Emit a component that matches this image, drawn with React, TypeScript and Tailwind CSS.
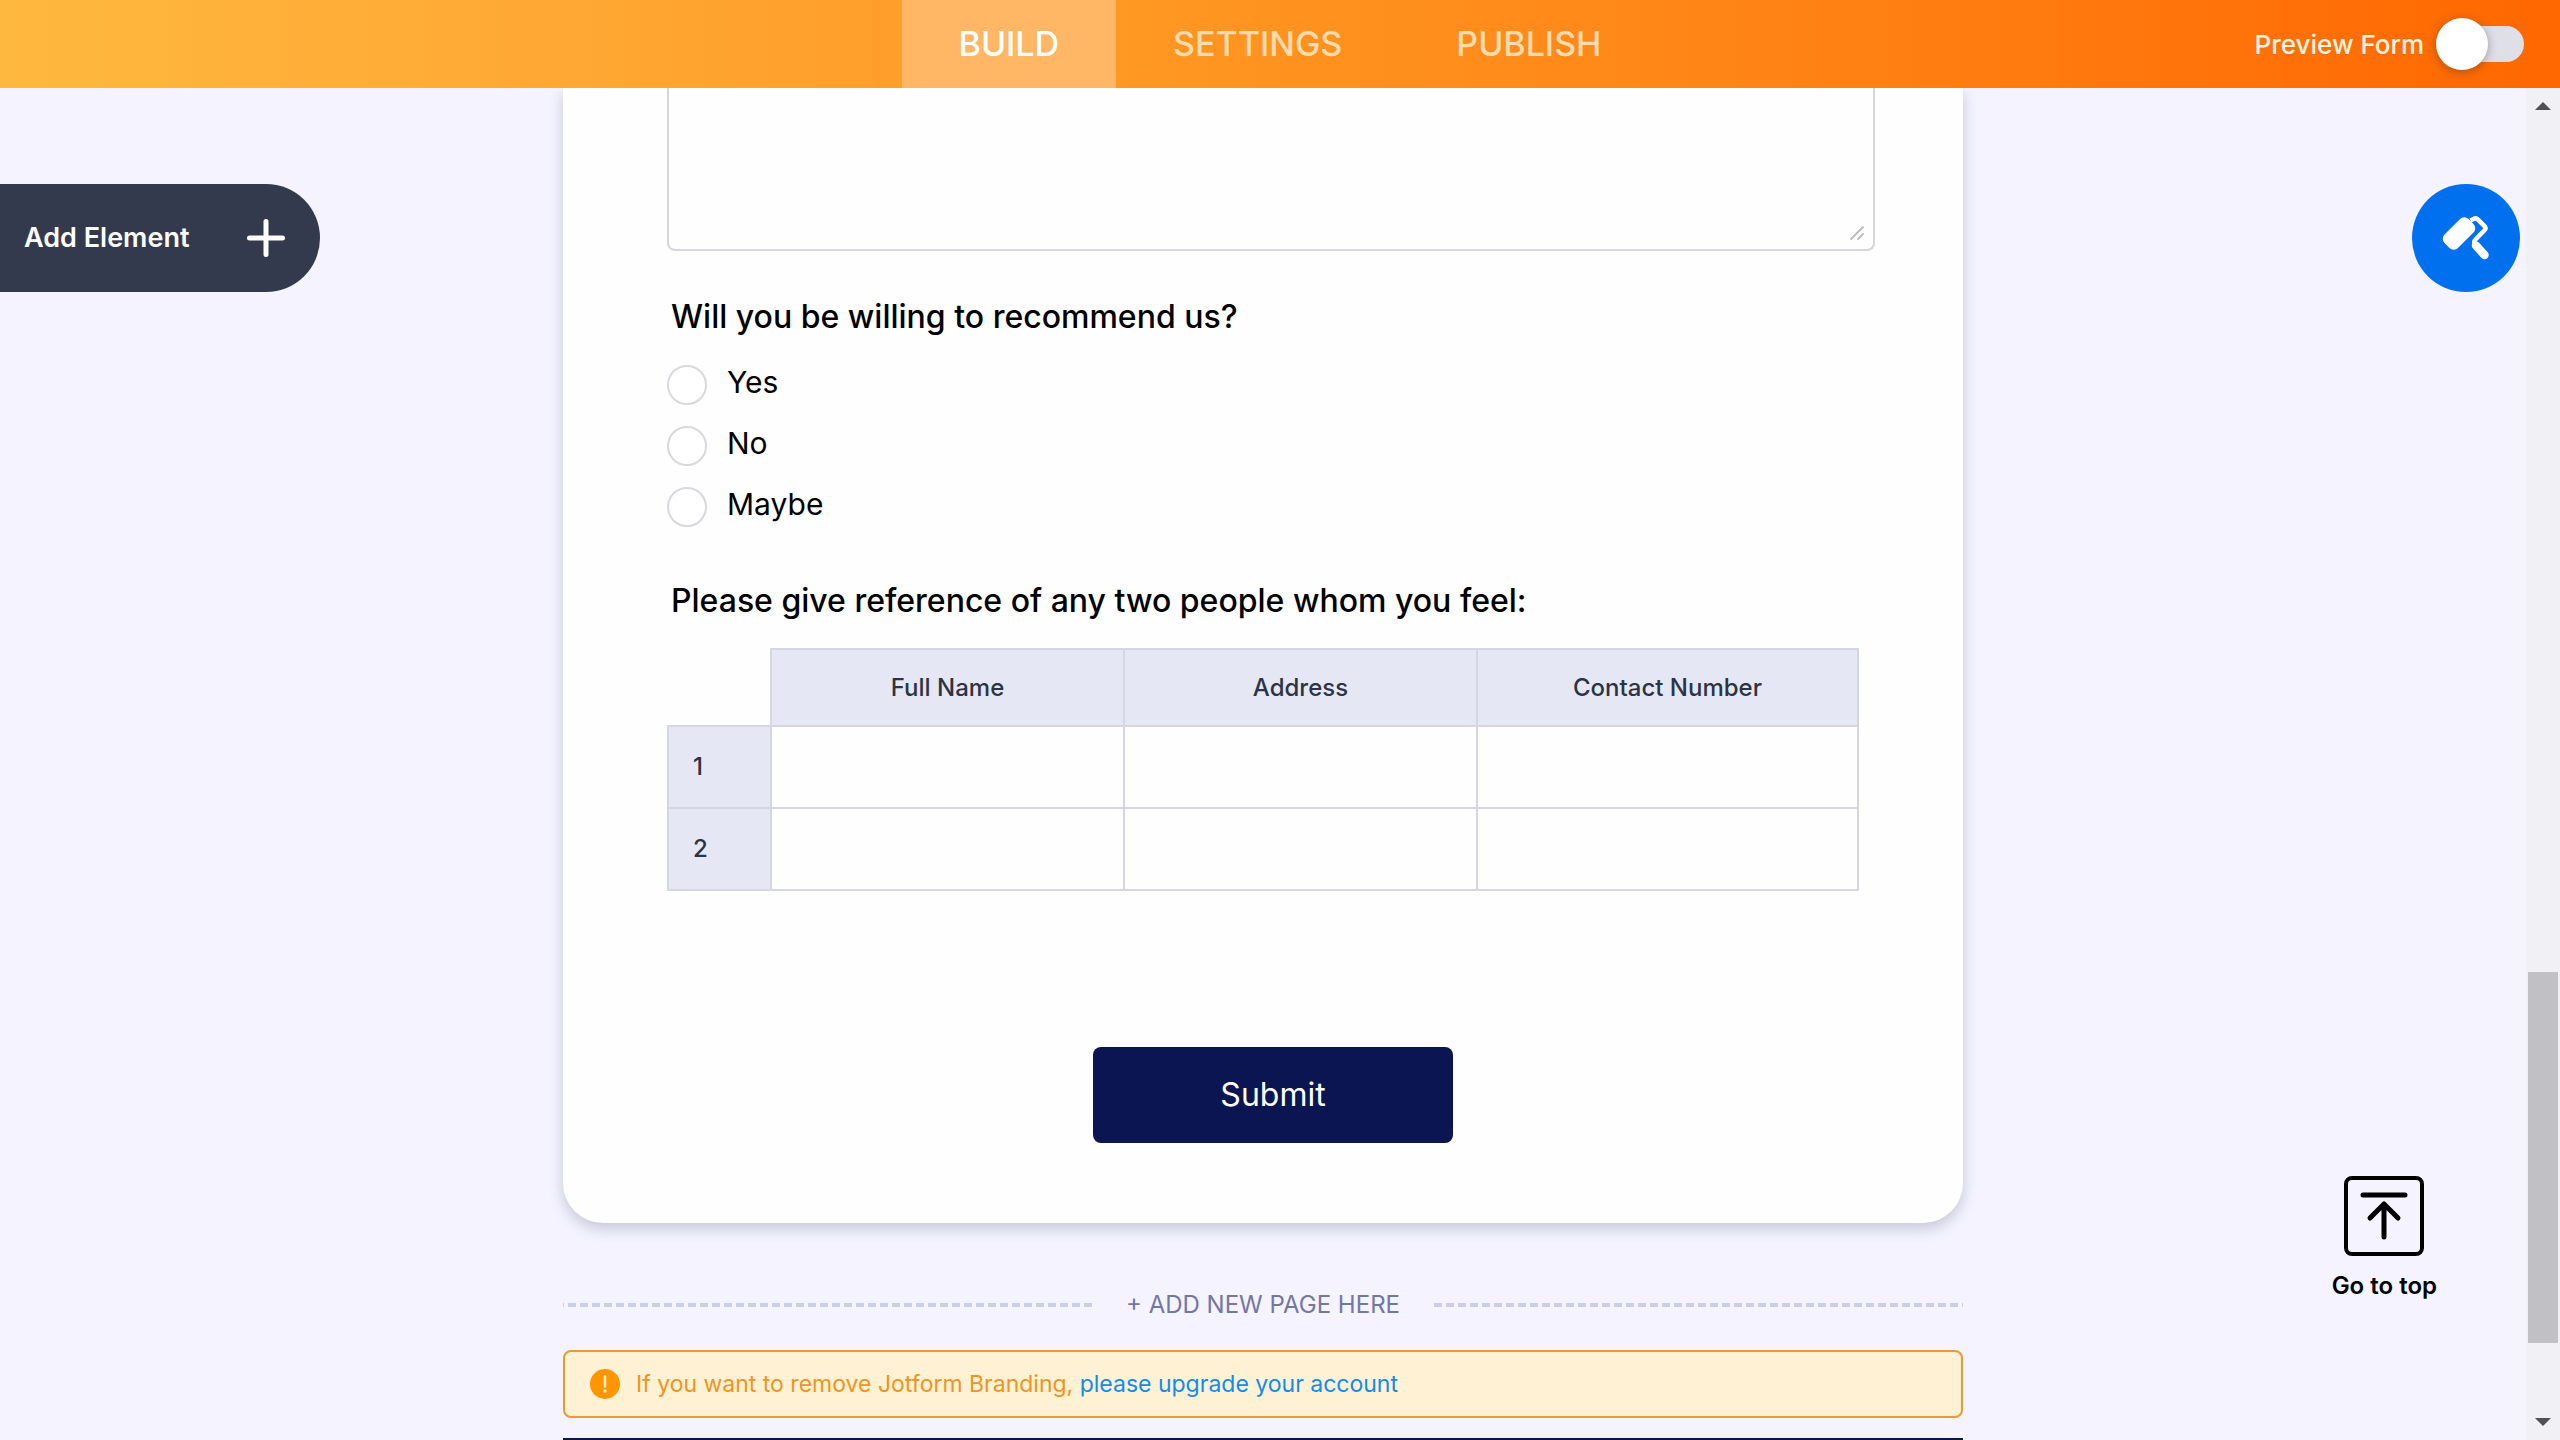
const tabs = ["BUILD", "SETTINGS", "PUBLISH"];
const options = ["Yes", "No", "Maybe"];
const columns = ["Full Name", "Address", "Contact Number"];
const rows = ["1", "2"];

function Header() {
  return (
    <header className="grid h-[88px] shrink-0 grid-cols-[1fr_auto_1fr] bg-linear-to-r from-[#ffb83f] via-[#ff931f] to-[#ff6700]">
      <nav className="col-start-2 flex text-[34px] font-medium">
        {tabs.map((tab, i) => (
          <a
            key={tab}
            href={`#${tab.toLowerCase()}`}
            className={
              i === 0
                ? "flex items-center bg-[#ffb665] px-[57px] pb-0.5 text-white"
                : "flex items-center px-[57px] pb-0.5 text-[#ffdbae]"
            }
          >
            {tab}
          </a>
        ))}
      </nav>
      <div className="flex items-center justify-end gap-3.5 pr-9 text-[26px] font-medium text-[#fff4e0]">
        <label htmlFor="preview">Preview Form</label>
        <input
          id="preview"
          type="checkbox"
          role="switch"
          className="relative h-9 w-[86px] appearance-none rounded-full bg-[#dfdfe8] before:absolute before:-top-2 before:-left-0.5 before:size-[52px] before:rounded-full before:bg-white before:shadow-[0_2px_10px_rgba(60,40,40,0.4)] before:content-['']"
        />
      </div>
    </header>
  );
}

function TextAreaField() {
  return (
    <div className="relative mr-[88px] ml-[104px]">
      <textarea
        aria-label="Suggestions"
        className="block h-[163px] w-full resize-none rounded-b-lg border-2 border-t-0 border-[#d5d5e3] bg-[#fefefe]"
      />
      <svg
        viewBox="0 0 16 16"
        className="absolute right-2.5 bottom-2.5 size-4"
        stroke="#bcbcc6"
        strokeWidth="2"
        strokeLinecap="round"
        aria-hidden="true"
      >
        <path d="M2 14L14 2M9 14L14 9" />
      </svg>
    </div>
  );
}

function RecommendField() {
  return (
    <fieldset className="mt-11 ml-[104px]">
      <legend className="ml-1 text-[32px] leading-11 font-medium">Will you be willing to recommend us?</legend>
      <div className="mt-[26px] flex flex-col gap-[21px]">
        {options.map((option) => (
          <label key={option} className="flex h-10 items-center gap-5 text-[30px]">
            <input
              type="radio"
              name="recommend"
              className="size-10 appearance-none rounded-full border-2 border-[#d8d8de] bg-white"
            />
            <span className="-mt-1.5">{option}</span>
          </label>
        ))}
      </div>
    </fieldset>
  );
}

function ReferenceTable() {
  return (
    <section className="mt-[52px] mr-[104px] ml-[104px]">
      <h2 className="ml-1 text-[32px] leading-11 font-medium">Please give reference of any two people whom you feel:</h2>
      <table className="mt-[25px] w-full table-fixed border-collapse text-2xl text-[#2c3345]">
        <colgroup>
          <col className="w-[103px]" />
          <col className="w-[353px]" />
          <col className="w-[353px]" />
          <col />
        </colgroup>
        <thead>
          <tr className="h-[77px]">
            <td />
            {columns.map((column) => (
              <th key={column} scope="col" className="border-2 border-[#d5d5e3] bg-[#e5e7f4] font-medium">
                {column}
              </th>
            ))}
          </tr>
        </thead>
        <tbody>
          {rows.map((row) => (
            <tr key={row} className="h-[82px]">
              <th scope="row" className="border-2 border-[#d5d5e3] bg-[#e5e7f4] pl-6 text-left font-medium">
                {row}
              </th>
              {columns.map((column) => (
                <td key={column} className="border-2 border-[#d5d5e3] p-0">
                  <input type="text" aria-label={`${column} ${row}`} className="block h-20 w-full px-4 outline-none" />
                </td>
              ))}
            </tr>
          ))}
        </tbody>
      </table>
    </section>
  );
}

function FormCard() {
  return (
    <form className="flex flex-col rounded-b-[40px] bg-[#fefefe] pb-20 shadow-[0_6px_14px_rgba(84,95,111,0.28)]">
      <TextAreaField />
      <RecommendField />
      <ReferenceTable />
      <button
        type="button"
        className="mt-[156px] ml-5 h-24 w-[360px] self-center rounded-lg bg-[#0a1551] text-[32px] text-white"
      >
        Submit
      </button>
    </form>
  );
}

function UpgradeNotice() {
  return (
    <p className="mt-[25px] flex h-[68px] items-center rounded-lg border-2 border-[#ea9a30] bg-[#fff1d3] px-[25px] text-[23px] text-[#f0941f]">
      <svg viewBox="0 0 30 30" className="mr-4 size-[30px]" aria-hidden="true">
        <circle cx="15" cy="15" r="15" fill="#ff9500" />
        <path d="M15 7.500v10" stroke="#ffe9c4" strokeWidth="2.6" strokeLinecap="round" />
        <circle cx="15" cy="22" r="1.7" fill="#ffe9c4" />
      </svg>
      <span className="whitespace-pre">If you want to remove Jotform Branding, </span>
      <a href="#upgrade" className="text-[#118cee]">
        please upgrade your account
      </a>
    </p>
  );
}

function Scrollbar() {
  return (
    <div aria-hidden="true" className="flex w-[34px] shrink-0 flex-col items-center bg-[#f1f0f4] py-3.5">
      <span className="h-2 border-x-8 border-b-8 border-x-transparent border-b-[#505055]" />
      <span className="flex-[862]" />
      <span className="w-[30px] flex-[371] bg-[#c1c0c4]" />
      <span className="flex-[75]" />
      <span className="h-2 border-x-8 border-t-8 border-x-transparent border-t-[#505055]" />
    </div>
  );
}

export default function App() {
  return (
    <div className="flex h-screen flex-col overflow-hidden bg-[#f4f3ff] font-['Inter',sans-serif] text-black">
      <Header />
      <div className="flex min-h-0 flex-1">
        <div className="relative min-w-0 flex-1 overflow-hidden">
          <main className="mx-auto max-w-[1400px]">
            <FormCard />
            <div className="mt-[62px] flex items-center gap-[34px]">
              <span className="h-1 flex-1 bg-[repeating-linear-gradient(270deg,#cbcdec_0_8px,transparent_8px_12px)]" />
              <button type="button" className="text-2xl leading-10 text-[#7377a3]">
                + ADD NEW PAGE HERE
              </button>
              <span className="h-1 flex-1 bg-[repeating-linear-gradient(90deg,#cbcdec_0_8px,transparent_8px_12px)]" />
            </div>
            <UpgradeNotice />
            <div className="mt-5 h-20 bg-[#0a1551]" />
          </main>

          <button
            type="button"
            className="absolute top-24 left-0 flex h-[108px] w-80 items-center justify-between rounded-r-full bg-[#343a4d] pr-[35px] pl-6 text-[27px] font-semibold text-white"
          >
            Add Element
            <svg viewBox="0 0 38 38" className="size-[38px]" stroke="currentColor" strokeWidth="5" strokeLinecap="round" aria-hidden="true">
              <path d="M19 2.500v33M2.500 19h33" />
            </svg>
          </button>

          <button
            type="button"
            aria-label="Form designer"
            className="absolute top-24 right-1.5 flex size-[108px] items-center justify-center rounded-full bg-[#0070ee] text-white"
          >
            <svg viewBox="0 0 48 44" className="h-11 w-12" fill="none" stroke="currentColor" aria-hidden="true">
              <rect x="0" y="8" width="34" height="19" rx="6" fill="currentColor" stroke="none" transform="rotate(-45 17 17.500)" />
              <path
                d="M28.500 4.500L31.500 2.900Q34 1.600 36 3.600L42.500 10.100Q44.500 12.200 42.500 14.300L33.500 23.500Q31.500 25.500 32.500 28"
                strokeWidth="4.500"
              />
              <path d="M34 29.500L42.500 39" strokeWidth="8.500" strokeLinecap="round" />
            </svg>
          </button>

          <button
            type="button"
            className="absolute right-[89px] bottom-[138px] flex flex-col items-center text-2xl font-semibold"
          >
            <span className="flex size-20 items-center justify-center rounded-lg border-4 border-black">
              <svg
                viewBox="0 0 48 48"
                className="size-12"
                fill="none"
                stroke="currentColor"
                strokeWidth="5"
                strokeLinecap="round"
                strokeLinejoin="round"
                aria-hidden="true"
              >
                <path d="M3 3h42M24 45V12M10 26L24 12L38 26" />
              </svg>
            </span>
            <span className="mt-3.5">Go to top</span>
          </button>
        </div>
        <Scrollbar />
      </div>
    </div>
  );
}
